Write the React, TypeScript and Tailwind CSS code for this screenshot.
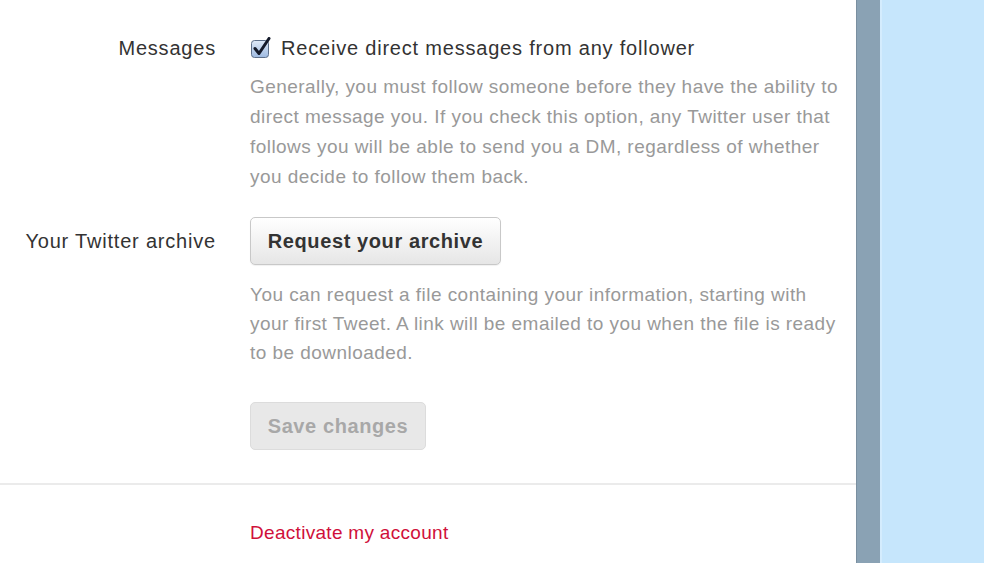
export default function App() {
  const font = { fontFamily: '"Liberation Sans", Arial, Helvetica, sans-serif' };

  return (
    <div className="flex h-screen w-full overflow-hidden" style={font}>
      {/* Settings panel */}
      <div className="w-[856px] shrink-0 bg-white pt-[33px]">
        {/* Messages */}
        <div className="grid grid-cols-[216px_1fr] gap-x-[34px]">
          <div className="text-right text-[20px] leading-[30px] tracking-[0.8px] text-[#333]">Messages</div>
          <div>
            <label className="flex items-center gap-[9px] text-[20px] leading-[30px] tracking-[0.8px] text-[#333]">
              <svg width="22" height="22" viewBox="0 0 22 22" className="shrink-0">
                <defs>
                  <linearGradient id="cb" x1="0" y1="0" x2="0" y2="1">
                    <stop offset="0" stopColor="#dfeaf8" />
                    <stop offset="1" stopColor="#9db9e0" />
                  </linearGradient>
                </defs>
                <rect x="1.5" y="3.5" width="17" height="17" rx="3" fill="url(#cb)" stroke="#5d6f8a" />
                <path d="M5 11.5 L9 16.5 L19 1.5" fill="none" stroke="#141a2a" strokeWidth="3" strokeLinecap="round" strokeLinejoin="round" />
              </svg>
              Receive direct messages from any follower
            </label>
            <p className="mt-[9px] text-[19px] leading-[30px] tracking-[0.45px] text-[#999]">
              Generally, you must follow someone before they have the ability to
              <br />
              direct message you. If you check this option, any Twitter user that
              <br />
              follows you will be able to send you a DM, regardless of whether
              <br />
              you decide to follow them back.
            </p>
          </div>
        </div>

        {/* Archive */}
        <div className="mt-[25px] grid grid-cols-[216px_1fr] gap-x-[34px]">
          <div className="pt-[9px] text-right text-[20px] leading-[30px] tracking-[0.8px] text-[#333]">
            Your Twitter archive
          </div>
          <div>
            <button className="h-[48px] w-[251px] rounded-[5px] border border-[#c8c8c8] bg-gradient-to-b from-white to-[#e6e6e6] text-[20px] font-bold tracking-[0.6px] text-[#333] shadow-[0_1px_1px_rgba(0,0,0,0.06)]">
              Request your archive
            </button>
            <p className="mt-[15px] text-[19px] leading-[29px] tracking-[0.45px] text-[#999]">
              You can request a file containing your information, starting with
              <br />
              your first Tweet. A link will be emailed to you when the file is ready
              <br />
              to be downloaded.
            </p>
            <button
              disabled
              className="mt-[35px] h-[48px] w-[176px] rounded-[5px] border border-[#dcdcdc] bg-[#e8e8e8] text-[20px] font-bold tracking-[0.6px] text-[#a8a8a8]"
            >
              Save changes
            </button>
          </div>
        </div>

        <div className="mt-[33px] h-[2px] bg-[#ebebeb]" />

        <div className="mt-[33px] grid grid-cols-[216px_1fr] gap-x-[34px]">
          <div />
          <a href="#" className="text-[19px] leading-[30px] tracking-[0.3px] text-[#d0103a]">
            Deactivate my account
          </a>
        </div>
      </div>

      {/* Side strip */}
      <div className="w-[24px] shrink-0 border-l border-[#7a8fa0] bg-[#8aa2b4]" />
      <div className="w-[2px] shrink-0 bg-[#d4ecfd]" />
      <div className="flex-1 bg-[#c6e6fc]" />
    </div>
  );
}
